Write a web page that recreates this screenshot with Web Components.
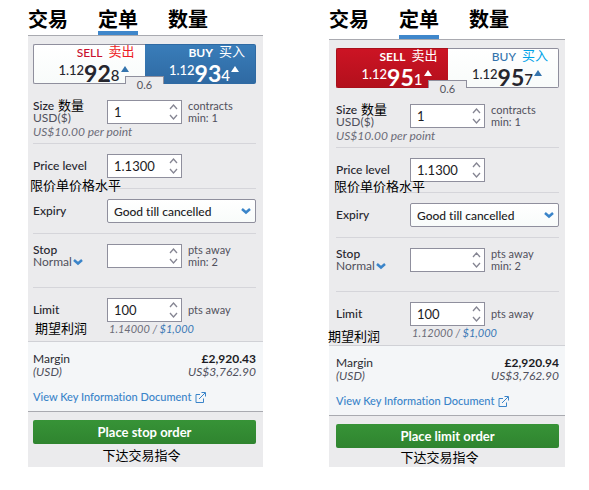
<!DOCTYPE html>
<html lang="zh-CN">
<head>
<meta charset="utf-8">
<meta name="viewport" content="width=device-width, initial-scale=1">
<title>Order tickets</title>
<style>
    body {
        margin: 0;
        background: #fff;
        color: #2b2b33;
        font-family: Lato, "Noto Sans CJK SC", sans-serif;
        font-size: 12px;
        font-variant-ligatures: none;
    }

    main {
        display: grid;
        grid-template-columns: 235fr 236fr;
        gap: 66px;
        padding: 0 24px 0 28px;
        align-items: start;
    }

    .stop {
        --pad-left: 5px;
        --pad-right: 7px;
        --head: 35px;
        --foot: 23px;
        --foot-shift: 6px;
    }

    .limit {
        --pad-left: 7px;
        --pad-right: 6px;
        --head: 39px;
        --foot: 19px;
        --foot-shift: 16px;
    }
</style>
</head>
<body>
<main>
    <order-ticket class="stop">
        <ticket-tabs slot="tabs"></ticket-tabs>
        <quote-pair slot="quotes" active="buy" sell="1.12 92 8" buy="1.12 93 4" spread="0.6"></quote-pair>
        <ticket-field label="Size" cn="数量" sub="USD($)" value="1" unit="contracts" min="min: 1" note="US$10.00 per point" style="--top: 16px; --height: 60px"></ticket-field>
        <ticket-field label="Price level" value="1.1300" style="--height: 45px"><cn-note style="--x: -3px; --y: 33px">限价单价格水平</cn-note></ticket-field>
        <ticket-select label="Expiry" value="Good till cancelled"></ticket-select>
        <ticket-field label="Stop" mode="Normal" value="" unit="pts away" min="min: 2" style="--height: 54px"></ticket-field>
        <ticket-field last label="Limit" value="100" unit="pts away" level="1.14000" gain="$1,000" style="--height: 53px"><cn-note style="--x: 2px; --y: 32px">期望利润</cn-note></ticket-field>
        <margin-info slot="margin" gbp="£2,920.43" usd="US$3,762.90"></margin-info>
        <span slot="action">Place stop order</span>
        <span slot="caption">下达交易指令</span>
    </order-ticket>

    <order-ticket class="limit">
        <ticket-tabs slot="tabs"></ticket-tabs>
        <quote-pair slot="quotes" active="sell" sell="1.12 95 1" buy="1.12 95 7" spread="0.6"></quote-pair>
        <ticket-field label="Size" cn="数量" sub="USD($)" value="1" unit="contracts" min="min: 1" note="US$10.00 per point" style="--top: 16px; --height: 60px"></ticket-field>
        <ticket-field label="Price level" value="1.1300" style="--height: 45px"><cn-note style="--x: -2px; --y: 30px">限价单价格水平</cn-note></ticket-field>
        <ticket-select label="Expiry" value="Good till cancelled"></ticket-select>
        <ticket-field label="Stop" mode="Normal" value="" unit="pts away" min="min: 2" style="--height: 54px"></ticket-field>
        <ticket-field last label="Limit" value="100" unit="pts away" level="1.12000" gain="$1,000" style="--height: 53px"><cn-note style="--x: -8px; --y: 36px">期望利润</cn-note></ticket-field>
        <margin-info slot="margin" gbp="£2,920.94" usd="US$3,762.90"></margin-info>
        <span slot="action">Place limit order</span>
        <span slot="caption">下达交易指令</span>
    </order-ticket>
</main>

<script>
const rowStyles = /*css*/ `
    :host {
        display: block;
        position: relative;
        box-sizing: border-box;
        min-height: var(--height, 45px);
        padding-top: var(--top, 10px);
        border-bottom: 1px solid #d5d5da;
    }
    :host([last]) { border-bottom: 0; }
    .row {
        display: grid;
        grid-template-columns: 74px 75px 1fr;
        grid-template-rows: 24px auto;
        align-items: center;
        line-height: 12px;
    }
    label { color: #26262e; font-weight: 500; }
`;

const chevron = /*html*/ `<svg width="10" height="7" viewBox="0 0 10 7"><path d="M1 1l4 3.500 4-3.500" fill="none" stroke="#3a84c9" stroke-width="2.500"/></svg>`;

class OrderTicket extends HTMLElement {
    constructor() {
        super();
        this.attachShadow({ mode: 'open' }).innerHTML = /*html*/ `
            <style>
                :host { display: block; }
                header { height: var(--head); border-bottom: 1px solid #a9aab0; box-sizing: content-box; }
                section { padding: 8px var(--pad-right) 0 var(--pad-left); background: #ebebed; }
                .margin { padding-top: 10px; padding-bottom: 7px; background: #f4f6f8; border-top: 1px solid #d0d1d6; border-bottom: 1px solid #a9aab0; }
                footer { padding: 8px var(--pad-right) 0 var(--pad-left); background: #ebebed; }
                button {
                    display: block;
                    width: 100%;
                    height: 24px;
                    padding: 0;
                    border: 0;
                    border-radius: 2px;
                    background: linear-gradient(#379337, #2f842f);
                    color: #fff;
                    font: bold 13px Lato, sans-serif;
                }
                .caption {
                    height: var(--foot);
                    padding-right: var(--foot-shift);
                    color: #000;
                    font-size: 13px;
                    line-height: var(--foot);
                    text-align: center;
                }
            </style>
            <header><slot name="tabs"></slot></header>
            <section>
                <slot name="quotes"></slot>
                <slot></slot>
            </section>
            <section class="margin"><slot name="margin"></slot></section>
            <footer>
                <button type="button"><slot name="action"></slot></button>
                <div class="caption"><slot name="caption"></slot></div>
            </footer>
        `;
    }
}

class TicketTabs extends HTMLElement {
    constructor() {
        super();
        this.attachShadow({ mode: 'open' }).innerHTML = /*html*/ `
            <style>
                :host { display: block; height: 100%; }
                nav { display: flex; gap: 30px; height: 100%; }
                button {
                    display: flex;
                    align-items: flex-start;
                    box-sizing: border-box;
                    padding: 8px 0 0;
                    border: 0;
                    border-bottom: 4px solid transparent;
                    background: none;
                    color: #000;
                    font: bold 20px/22px "Noto Sans CJK SC", sans-serif;
                }
                .current { border-color: #3f87cb; }
            </style>
            <nav>
                <button type="button">交易</button>
                <button type="button" class="current">定单</button>
                <button type="button">数量</button>
            </nav>
        `;
    }
}

class QuotePair extends HTMLElement {
    connectedCallback() {
        this.attachShadow({ mode: 'open' });
        this.render();
    }

    side(name, text, cn) {
        const [base, pips, tenth] = this.getAttribute(name).split(' ');
        const on = this.getAttribute('active') === name ? 'on' : '';
        return /*html*/ `
            <button type="button" class="${name} ${on}">
                <span class="title"><b>${text}</b><span class="cn">${cn}</span></span>
                <span class="price">
                    <span class="base">${base}</span><span class="pips">${pips}</span><span class="tenth">${tenth}</span>
                    <svg width="8" height="6" viewBox="0 0 8 6"><path d="M4 0l4 6H0z" fill="currentColor"/></svg>
                </span>
            </button>
        `;
    }

    render() {
        this.shadowRoot.innerHTML = /*html*/ `
            <style>
                :host { display: grid; grid-template-columns: 1fr 1fr; position: relative; }
                button {
                    display: flex;
                    flex-direction: column;
                    align-items: flex-end;
                    height: 40px;
                    box-sizing: border-box;
                    padding: 0 10px 0 0;
                    border: 1px solid #8f8f9d;
                    background: linear-gradient(#fff, #f8fbfa);
                    color: #26262e;
                    font-family: inherit;
                }
                .sell { border-right: 0; border-radius: 2px 0 0 2px; }
                .buy { border-left: 0; border-radius: 0 2px 2px 0; }
                .sell.on { background: linear-gradient(#cc1424, #b3101c); border-color: #a8101b; color: #fff; }
                .buy.on { background: linear-gradient(#397db9, #2f6aa3); border-color: #2f6aa3; color: #fff; }
                .title { display: flex; gap: 6px; height: 16px; font-size: 12px; line-height: 16px; }
                .title b { font-weight: 500; }
                .on .title b { font-weight: bold; }
                .cn { font: 13px/12px "Noto Sans CJK SC", sans-serif; }
                .sell .title { color: #c8102e; }
                .sell .cn { color: #ed1c24; }
                .buy .title { color: #3474ad; }
                .buy .cn { color: #00a2e8; }
                .on .title, .on .cn { color: #fff; }
                .price { display: flex; align-items: flex-start; padding-right: 6px; }
                .base { font-size: 13px; line-height: 18px; font-weight: 500; }
                .pips { font-size: 23px; line-height: 24px; font-weight: bold; }
                .tenth { font-size: 15px; line-height: 29px; font-weight: 500; }
                svg { margin: 5px 0 0 1px; color: #3474ad; }
                .on svg { color: #fff; }
                .spread {
                    position: absolute;
                    left: 92px;
                    top: 32px;
                    width: 37px;
                    height: 16px;
                    border: 1px solid #8f8f9d;
                    border-bottom: 0;
                    background: #ebebed;
                    clip-path: polygon(0 0, 100% 0, 100% 8px, 38px 8px, 38px 100%, 1px 100%, 1px 8px, 0 8px);
                    color: #55555f;
                    font-size: 11px;
                    line-height: 16px;
                    text-align: center;
                }
            </style>
            ${this.side('sell', 'SELL', '卖出')}
            ${this.side('buy', 'BUY', '买入')}
            <span class="spread">${this.getAttribute('spread')}</span>
        `;
    }
}

class CnNote extends HTMLElement {
    constructor() {
        super();
        this.attachShadow({ mode: 'open' }).innerHTML = /*html*/ `
            <style>
                :host {
                    position: absolute;
                    left: var(--x);
                    top: var(--y);
                    color: #000;
                    font: 13px/16px "Noto Sans CJK SC", sans-serif;
                    white-space: nowrap;
                }
            </style>
            <slot></slot>
        `;
    }
}

class TicketField extends HTMLElement {
    connectedCallback() {
        this.attachShadow({ mode: 'open' });
        this.render();
    }

    render() {
        const get = name => this.getAttribute(name) || '';
        this.shadowRoot.innerHTML = /*html*/ `
            <style>
                ${rowStyles}
                .name { display: flex; gap: 4px; height: 12px; }
                .cn { color: #000; font: 13px/10px "Noto Sans CJK SC", sans-serif; }
                .sub, .unit { color: #50505c; }
                .unit { padding-left: 6px; font-size: 11px; }
                .mode { display: flex; align-items: center; gap: 1px; padding: 0; border: 0; background: none; font: inherit; color: #50505c; }
                .box {
                    display: flex;
                    height: 24px;
                    box-sizing: border-box;
                    border: 1px solid #8f8f9d;
                    background: #fff;
                }
                input {
                    flex: 1;
                    min-width: 0;
                    padding: 0 0 0 6px;
                    border: 0;
                    background: none;
                    color: #1c1c24;
                    font: 13px Lato, sans-serif;
                }
                .steps { display: flex; flex-direction: column; justify-content: space-between; padding: 3px 3px 3px 0; }
                .steps button { display: block; height: 6px; padding: 0; border: 0; background: none; }
                .steps svg { display: block; }
                .note { grid-column: 1 / 4; color: #6c6c78; font-size: 12px; font-style: italic; line-height: 16px; }
                .gain { grid-column: 2 / 4; padding-left: 2px; color: #6c6c78; font-size: 11px; font-style: italic; line-height: 14px; }
                .gain b { color: #3a78b5; font-weight: normal; }
            </style>
            <div class="row">
                <div>
                    <div class="name"><label for="value">${get('label')}</label>${get('cn') && `<span class="cn">${get('cn')}</span>`}</div>
                    ${get('sub') && `<div class="sub">${get('sub')}</div>`}
                    ${get('mode') && `<button type="button" class="mode">${get('mode')}${chevron}</button>`}
                </div>
                <div class="box">
                    <input id="value" type="text" value="${get('value')}">
                    <div class="steps">
                        <button type="button" aria-label="Increase"><svg width="9" height="6" viewBox="0 0 9 6"><path d="M1 5l3.500-4L8 5" fill="none" stroke="#858592" stroke-width="1.300"/></svg></button>
                        <button type="button" aria-label="Decrease"><svg width="9" height="6" viewBox="0 0 9 6"><path d="M1 1l3.500 4L8 1" fill="none" stroke="#858592" stroke-width="1.300"/></svg></button>
                    </div>
                </div>
                <div class="unit">${get('unit')}${get('min') && `<br>${get('min')}`}</div>
                ${get('note') && `<div class="note">${get('note')}</div>`}
                ${get('gain') && `<div class="gain">${get('level')} / <b>${get('gain')}</b></div>`}
            </div>
            <slot></slot>
        `;
    }
}

class TicketSelect extends HTMLElement {
    connectedCallback() {
        this.attachShadow({ mode: 'open' });
        this.render();
    }

    render() {
        this.shadowRoot.innerHTML = /*html*/ `
            <style>
                ${rowStyles}
                .box { display: grid; grid-column: 2 / 4; align-items: center; }
                .box > * { grid-area: 1 / 1; }
                select {
                    appearance: none;
                    width: 100%;
                    height: 24px;
                    padding: 0 20px 0 6px;
                    border: 1px solid #8f8f9d;
                    border-radius: 2px;
                    background: linear-gradient(#fff, #f8fbfa);
                    color: #1c1c24;
                    font: 500 12px Lato, sans-serif;
                    font-variant-ligatures: none;
                }
                svg { justify-self: end; margin-right: 5px; pointer-events: none; }
            </style>
            <div class="row">
                <label for="value">${this.getAttribute('label')}</label>
                <div class="box">
                    <select id="value"><option>${this.getAttribute('value')}</option></select>
                    ${chevron}
                </div>
            </div>
        `;
    }
}

class MarginInfo extends HTMLElement {
    connectedCallback() {
        this.attachShadow({ mode: 'open' });
        this.render();
    }

    render() {
        this.shadowRoot.innerHTML = /*html*/ `
            <style>
                :host { display: block; line-height: 13px; }
                .line { display: flex; justify-content: space-between; }
                .line b { color: #1c1c24; }
                i { color: #50505c; }
                a { display: flex; align-items: center; gap: 4px; margin-top: 12px; font-size: 11px; font-weight: 500; line-height: 14px; color: #3a84c9; text-decoration: none; }
            </style>
            <div class="line"><span>Margin</span><b>${this.getAttribute('gbp')}</b></div>
            <div class="line"><i>(USD)</i><i>${this.getAttribute('usd')}</i></div>
            <a href="#">View Key Information Document
                <svg width="11" height="11" viewBox="0 0 11 11" fill="none" stroke="currentColor"><path d="M5 2.500H1v8h7.500V6.500M4 7l6-6M6.500 .5h4v4"/></svg>
            </a>
        `;
    }
}

customElements.define('order-ticket', OrderTicket);
customElements.define('ticket-tabs', TicketTabs);
customElements.define('quote-pair', QuotePair);
customElements.define('cn-note', CnNote);
customElements.define('ticket-field', TicketField);
customElements.define('ticket-select', TicketSelect);
customElements.define('margin-info', MarginInfo);
</script>
</body>
</html>
